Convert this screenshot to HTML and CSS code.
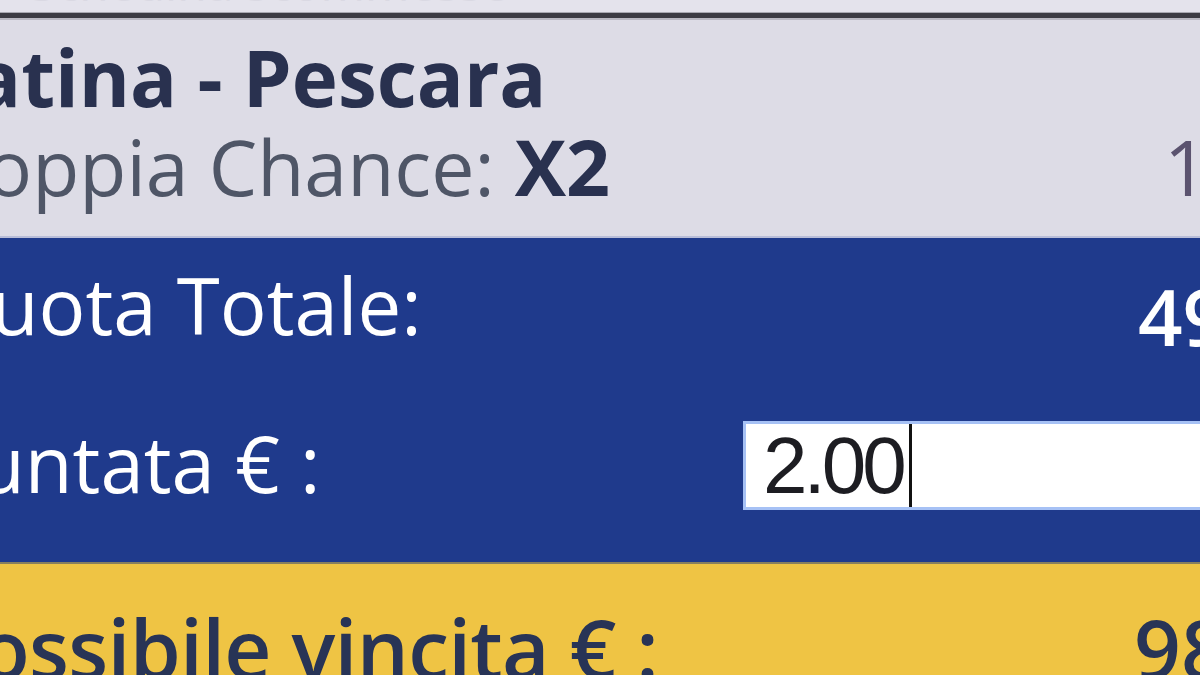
FILE: index.html
```html
<!DOCTYPE html>
<html lang="it">
<head>
<meta charset="utf-8">
<title>Schedina</title>
<link rel="stylesheet" href="styles.css">
</head>
<body>
<div class="slip">
  <div class="top-strip"><span class="top-text">Schedina scommesse</span></div>
  <div class="rule"></div>
  <section class="event">
    <div class="event-title">Latina - Pescara</div>
    <div class="event-row">
      <div class="event-bet">Doppia Chance: <b>X2</b></div>
      <div class="event-odd">1.40</div>
    </div>
  </section>
  <section class="totals">
    <div class="row row-quota">
      <div class="label">Quota Totale:</div>
      <div class="value">49.00</div>
    </div>
    <div class="row row-stake">
      <div class="label">Puntata € :</div>
      <div class="stake-input"><span class="stake-text">2.00</span><span class="caret"></span></div>
    </div>
  </section>
  <section class="win">
    <div class="row row-win">
      <div class="label">Possibile vincita € :</div>
      <div class="value">98.00</div>
    </div>
  </section>
</div>
</body>
</html>
```
FILE: styles.css
```css
html, body {
  margin: 0;
  padding: 0;
  overflow: hidden;
  width: 1200px;
  height: 675px;
  background: #dddce6;
}

.slip {
  width: 1420px;
  margin-left: -70px;
  font-family: "Open Sans", "Noto Sans", sans-serif;
}

.top-strip {
  height: 12px;
  overflow: hidden;
  background: #e4e3ec;
  padding-left: 100px;
}

.top-text {
  display: block;
  margin-top: -42px;
  font-size: 48px;
  line-height: 50px;
  color: #dad9e3;
}

.rule {
  height: 5px;
  background: #3c3c44;
  border-top: 1px solid #a9a9b2;
  border-bottom: 2px solid #b9b8c2;
}

.event {
  background: #dddce6;
  padding: 12px 0 24px;
  border-bottom: 2px solid #b8bdd8;
}

.event-title {
  font-size: 78px;
  line-height: 90px;
  font-weight: 700;
  color: #29314f;
  white-space: nowrap;
}

.event-row {
  display: flex;
  font-size: 77px;
  line-height: 90px;
  white-space: nowrap;
}

.event-bet {
  flex: 0 0 1234px;
  color: #4f5667;
}

.event-bet b {
  font-weight: 700;
  color: #29314f;
}

.event-odd {
  color: #5b536f;
}

.totals {
  background: #1f3a8c;
  padding: 22px 0 52px;
}

.row {
  display: flex;
  align-items: flex-start;
  white-space: nowrap;
  font-size: 78px;
  line-height: 90px;
}

.totals .row {
  color: #ffffff;
}

.row-quota {
  margin-bottom: 57px;
}

.row-quota .label {
  flex: 0 0 1208px;
}

.row-quota .value {
  font-weight: 600;
  padding-top: 11px;
}

.row-stake .label {
  flex: 0 0 813px;
}

.stake-input {
  flex: 0 0 600px;
  height: 89px;
  margin-top: 3px;
  box-sizing: border-box;
  background: #ffffff;
  border: 3px solid #a6c1f5;
  display: flex;
  align-items: center;
  padding-left: 17px;
}

.stake-text {
  font-family: "Liberation Sans", Arial, sans-serif;
  font-size: 80px;
  letter-spacing: -4px;
  line-height: 83px;
  color: #1d1d22;
}

.caret {
  display: block;
  width: 3px;
  height: 83px;
  background: #111111;
  margin-left: 6px;
}

.win {
  background: #efc444;
  border-top: 2px solid #877f5e;
  padding-top: 33px;
  height: 120px;
}

.row-win {
  font-size: 82px;
  line-height: 100px;
  font-weight: 600;
  color: #283456;
}

.row-win .label {
  flex: 0 0 1204px;
  letter-spacing: -0.7px;
}
```
